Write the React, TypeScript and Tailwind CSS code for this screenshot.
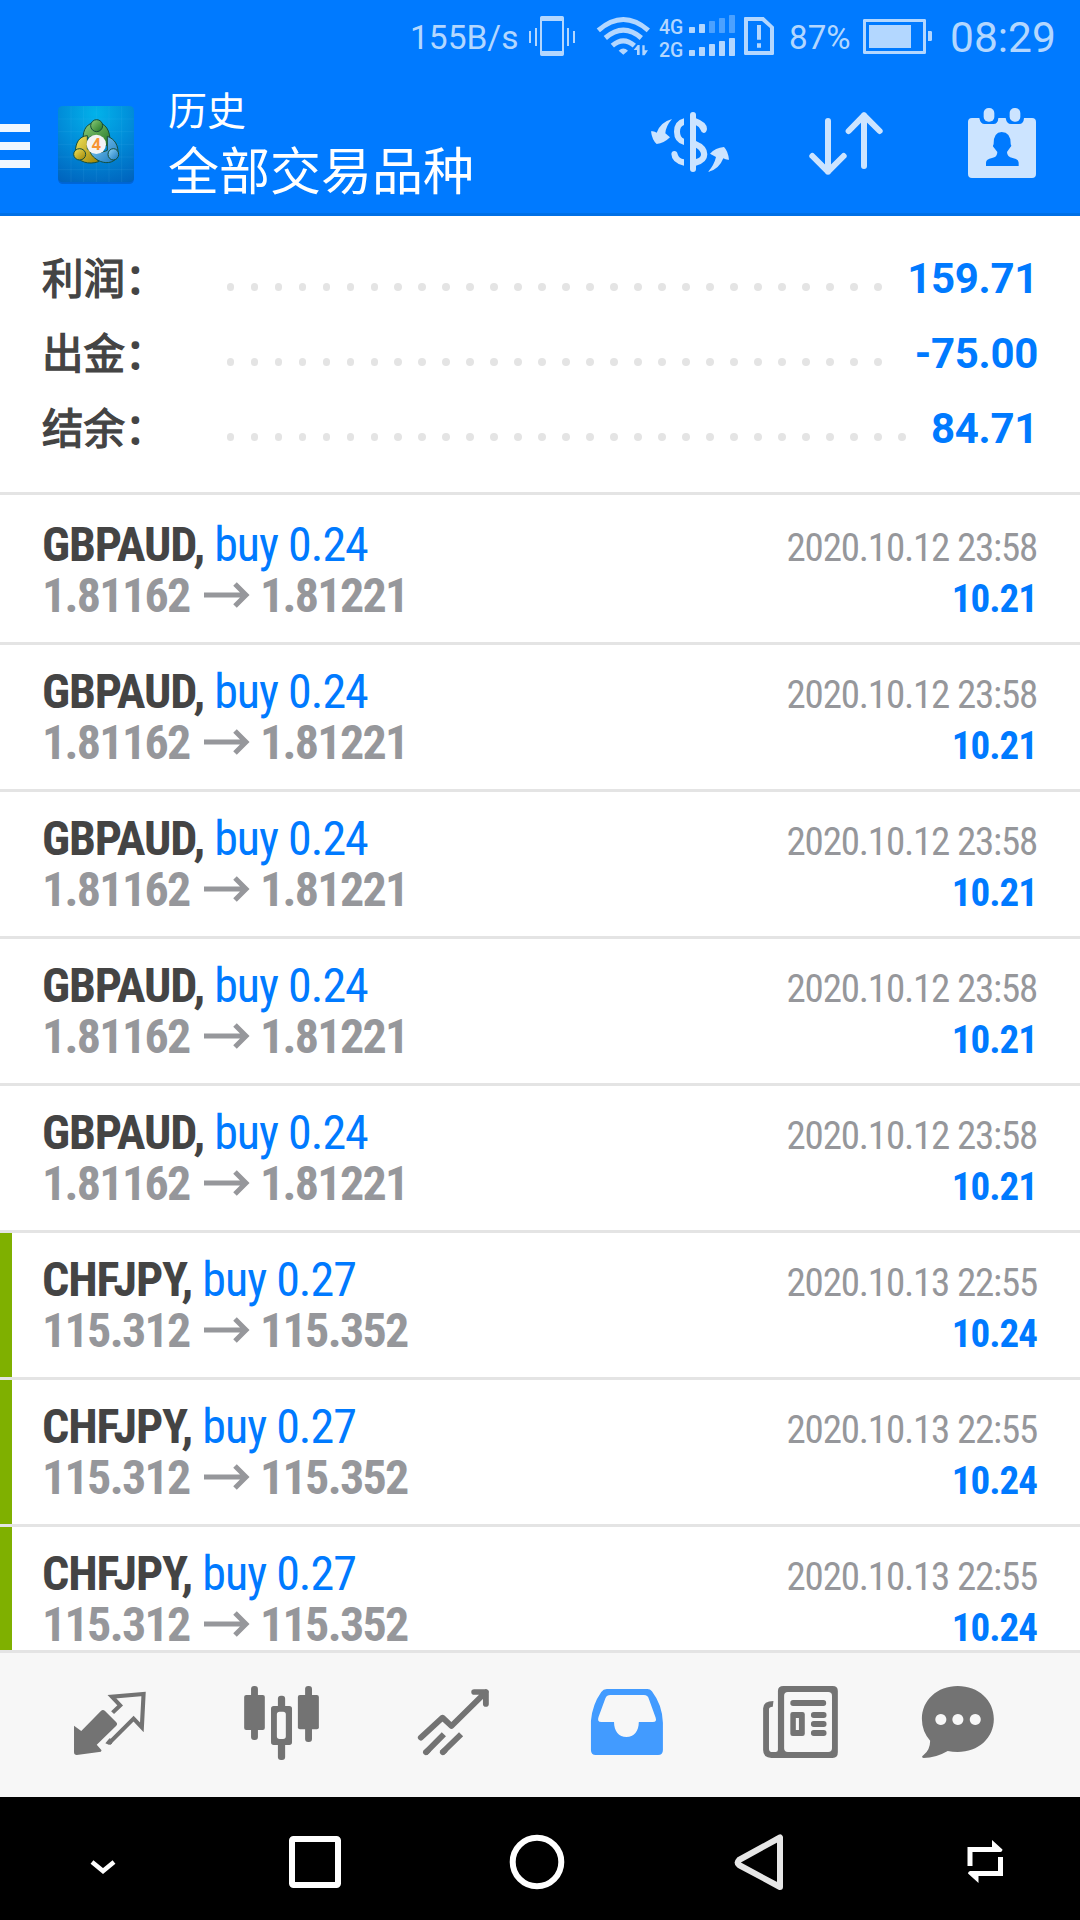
import React from "react";

type Trade = {
  symbol: string;
  volume: string;
  open: string;
  close: string;
  time: string;
  profit: string;
  tp?: boolean;
};

const gbp: Trade = {
  symbol: "GBPAUD,",
  volume: "buy 0.24",
  open: "1.81162",
  close: "1.81221",
  time: "2020.10.12 23:58",
  profit: "10.21",
};
const chf: Trade = {
  symbol: "CHFJPY,",
  volume: "buy 0.27",
  open: "115.312",
  close: "115.352",
  time: "2020.10.13 22:55",
  profit: "10.24",
  tp: true,
};
const trades: Trade[] = [gbp, gbp, gbp, gbp, gbp, chf, chf, chf];

const totals = [
  { label: "利润：", dots: 28, value: "159.71" },
  { label: "出金：", dots: 28, value: "-75.00" },
  { label: "结余：", dots: 29, value: "84.71" },
];

function StatusBar() {
  return (
    <div className="flex h-[75px] items-start text-[#b3d7ff]">
      <div className="ml-[410px] mt-[18px] w-[118px] whitespace-nowrap text-[33.5px] leading-[39px]">155B/s</div>
      <svg className="mt-[14px] h-[43px] w-[48px] shrink-0" viewBox="384 42 144 129" fill="currentColor">
        <path fillRule="evenodd" d="M425 48h62q5 0 5 5v110q0 5-5 5h-62q-5 0-5-5V53q0-5 5-5zM426 63v90h60V63z" />
        <path d="M387 93h6v36h-6zM405 84h6v54h-6zM501 84h6v54h-6zM519 93h6v36h-6z" />
      </svg>
      <svg className="ml-[20px] mt-[15px] h-[42px] w-[55px] shrink-0" viewBox="588 45 165 126" fill="none" stroke="currentColor" strokeWidth="15">
        <path d="M595 91Q670 26 745 91M616 114Q670 67 724 114M637 137Q670 108 703 137" />
        <path d="M656 152Q670 139 684 152L670 164z" fill="currentColor" stroke="none" />
        <path d="M701 150L713 135h6v30h-8v-15zM727 136h7v15h10l-10 15h-7z" fill="currentColor" stroke="none" />
      </svg>
      <div className="ml-[8px] mt-[15.5px] w-[29px] text-[19.5px] font-medium leading-[23px]">
        <div>4G</div>
        <div>2G</div>
      </div>
      <svg className="mt-[14px] h-[43px] w-[48px] shrink-0" viewBox="864 42 144 129" fill="currentColor">
        <rect x="867" y="81" width="18" height="18" rx="2" />
        <rect x="897" y="72" width="18" height="27" rx="2" />
        <g opacity=".42">
          <rect x="927" y="63" width="18" height="36" rx="2" />
          <rect x="957" y="54" width="18" height="45" rx="2" />
          <rect x="987" y="45" width="18" height="54" rx="2" />
        </g>
        <rect x="867" y="150" width="18" height="18" rx="2" />
        <rect x="897" y="141" width="18" height="27" rx="2" />
        <rect x="927" y="132" width="18" height="36" rx="2" />
        <rect x="957" y="123" width="18" height="45" rx="2" />
        <rect x="987" y="114" width="18" height="54" rx="2" />
      </svg>
      <svg className="ml-[7px] mt-[15px] h-[41px] w-[32px] shrink-0" viewBox="9 45 96 123" fill="currentColor">
        <path fillRule="evenodd" d="M14 51h57l31 29v81q0 4-4 4H16q-4 0-4-4V53zM24 63v90h66V84L66 63z" />
        <path d="M51 75h12v44H51zM51 130h12v13H51z" />
      </svg>
      <div className="ml-[14px] mt-[18px] w-[73px] whitespace-nowrap text-[33.2px] leading-[39px]">87%</div>
      <svg className="mt-[17px] h-[39px] w-[71px] shrink-0" viewBox="366 51 213 117" fill="currentColor">
        <path fillRule="evenodd" d="M373 57h181q4 0 4 4v97q0 4-4 4H373q-4 0-4-4V61q0-4 4-4zM378 66v87h171V66z" />
        <path d="M387 75h126v69H387zM564 93h8q4 0 4 4v22q0 4-4 4h-8z" />
      </svg>
      <div className="ml-[17px] mt-[13px] whitespace-nowrap text-[42.5px] leading-[49px]">08:29</div>
    </div>
  );
}

function AppLogo() {
  return (
    <svg className="ml-[26px] mt-[28px] h-[82px] w-[80px] shrink-0" viewBox="168 84 240 246">
      <defs>
        <radialGradient id="tile" cx=".5" cy=".1" r="1">
          <stop offset="0" stopColor="#02b2ea" />
          <stop offset=".5" stopColor="#018bd8" />
          <stop offset="1" stopColor="#0063bd" />
        </radialGradient>
        <linearGradient id="green" x1="0" y1="0" x2="1" y2="1">
          <stop offset="0" stopColor="#8fcf7c" />
          <stop offset="1" stopColor="#1f7423" />
        </linearGradient>
        <linearGradient id="gold" x1="0" y1="0" x2="1" y2="1">
          <stop offset="0" stopColor="#f3e45c" />
          <stop offset="1" stopColor="#9c8204" />
        </linearGradient>
        <linearGradient id="sky" x1="0" y1="0" x2="1" y2="1">
          <stop offset="0" stopColor="#8fd3f7" />
          <stop offset="1" stopColor="#1576bd" />
        </linearGradient>
      </defs>
      <rect x="174" y="98" width="228" height="229" rx="14" fill="#003f8f" opacity=".35" />
      <rect x="174" y="93" width="228" height="229" rx="14" fill="url(#tile)" />
      <path d="M213 94v227M251 94v227M289 94v227M327 94v227M365 94v227M175 132h226M175 170h226M175 208h226M175 246h226M175 284h226" stroke="#7fd4ff" strokeOpacity=".14" strokeWidth="2" />
      <g stroke="#154d3a" strokeWidth="3">
        <path d="M250 196c-4-34 14-54 39-54s45 24 40 64l-20 10-4-30-30-2z" fill="url(#green)" />
        <path d="M262 182c-24 2-36 20-36 52 8 28 40 36 70 26l-16-28-18-10z" fill="url(#gold)" />
        <path d="M322 184c22 8 34 26 32 56-10 28-44 28-66 12-12-8-18-18-18-26 18 6 36 8 52 0z" fill="url(#sky)" />
        <circle cx="290" cy="152" r="18" fill="url(#green)" />
        <ellipse cx="239" cy="238" rx="18" ry="17" fill="url(#gold)" />
        <ellipse cx="340" cy="238" rx="16" ry="17" fill="url(#sky)" />
      </g>
      <circle cx="289" cy="208" r="29" fill="#f3f3f6" />
      <text x="289" y="225" textAnchor="middle" fontSize="48" fontWeight="700" fill="#f79433" fontFamily="Open Sans, sans-serif">4</text>
    </svg>
  );
}

function Header() {
  return (
    <header className="h-[216px] shrink-0 border-b-[3px] border-[#0070e6] bg-[#007aff] text-white">
      <StatusBar />
      <div className="flex h-[138px] items-start">
        <div className="mt-[49px] flex w-[30px] flex-col gap-[10px]">
          <div className="h-[8px] bg-[#f0f7ff]" />
          <div className="h-[8px] bg-[#f0f7ff]" />
          <div className="h-[8px] bg-[#f0f7ff]" />
        </div>
        <AppLogo />
        <div className="ml-[32px] mt-[5px] w-[482px] font-['Noto_Sans_CJK_SC',sans-serif]">
          <div className="text-[39px] leading-[57px]">历史</div>
          <div className="text-[51px] leading-[62px]">全部交易品种</div>
        </div>
        <svg className="mt-[35px] h-[64px] w-[80px] shrink-0" viewBox="90 105 240 192" fill="#cce4ff">
          <rect x="210" y="111" width="18" height="180" rx="9" />
          <path d="M192 130v20q-12 4-12 20t12 21v19q-30-8-30-40t30-40z" />
          <path d="M228 130q33 12 33 32-2 12-10 12-7-1-9-9-4-10-14-14z" />
          <path d="M228 198q34 14 34 40t-34 34v-20q15-3 15-14t-15-20z" />
          <path d="M192 272q-37-8-38-35 1-9 9-9 8 0 10 10 4 13 19 15z" />
          <path d="M156 132q-19 22-20 43l14 12q-18 18-40 20-14-12-17-38 10-2 17 4 12-32 46-41z" />
          <path d="M264 291q19-22 24-45l-18-10q16-18 42-20 12 12 15 38-9 1-17-4-13 34-46 41z" />
        </svg>
        <svg className="ml-[78px] mt-[35px] h-[66px] w-[77px] shrink-0" viewBox="564 105 231 198" fill="none" stroke="#cce4ff" strokeWidth="18" strokeLinecap="round" strokeLinejoin="round">
          <path d="M624 138v152M577 243l47 47 47-47M732 273V121M686 168l46-47 47 47" />
        </svg>
        <svg className="ml-[82px] mt-[32px] h-[72px] w-[70px] shrink-0" viewBox="1041 96 210 216" fill="#cce4ff">
          <path fillRule="evenodd" d="M1056 129h22q3 18 16 18h26q14 0 15-18h22q3 18 16 18h24q14 0 15-18h24q12 0 12 12v156q0 12-12 12h-180q-12 0-12-12V141q0-12 12-12zM1145 171q-25 1-24 37-4 5 0 9l11 14q0 16-16 18-18 3-18 14v10h98v-10q0-11-18-14-17-3-17-18l10-14q5-4 1-9 1-36-27-37z" />
          <rect x="1091" y="99" width="32" height="41" rx="15" />
          <rect x="1169" y="99" width="32" height="41" rx="15" />
        </svg>
      </div>
    </header>
  );
}

function Summary() {
  return (
    <section className="h-[279px] shrink-0 border-b-[3px] border-[#e4e4e4] pt-[23px]">
      {totals.map((t) => (
        <div key={t.label} className="flex h-[75px] items-center pl-[42px] pr-[42px]">
          <div className="w-[184.6px] font-['Noto_Sans_CJK_SC',sans-serif] text-[41.5px] leading-[75px] text-[#444] [-webkit-text-stroke:1.3px_#444]">{t.label}</div>
          <div className="mt-[21px] flex gap-[16.4px]">
            {Array.from({ length: t.dots }, (_, i) => (
              <span key={i} className="size-[7.6px] rounded-full bg-[#e4e4e4]" />
            ))}
          </div>
          <div className="ml-auto mt-[5px] whitespace-nowrap text-[42px] font-bold leading-[70px] tracking-[-0.3px] text-[#007aff]">{t.value}</div>
        </div>
      ))}
    </section>
  );
}

function TradeRow({ trade }: { trade: Trade }) {
  return (
    <div className="flex h-[147px] shrink-0 border-b-[3px] border-[#e4e4e4] font-['Roboto_Condensed',Roboto,sans-serif] first:h-[150px] first:pt-[3px]">
      <div className={trade.tp ? "w-[12px] bg-[#7fb000]" : "w-[12px]"} />
      <div className="flex-1 pl-[30px] pr-[43px] pt-[21px]">
        <div className="flex h-[51px] items-baseline justify-between leading-[51px]">
          <div className="whitespace-nowrap text-[48px] tracking-[-1px]">
            <span className="font-bold tracking-[-1.1px] text-[#444]">{trade.symbol}</span>{" "}
            <span className="text-[#007aff]">{trade.volume}</span>
          </div>
          <div className="whitespace-nowrap text-[39px] tracking-[-1.2px] text-[#96979b]">{trade.time}</div>
        </div>
        <div className="flex h-[51px] items-baseline justify-between leading-[51px]">
          <div className="flex items-baseline whitespace-nowrap text-[48px] font-bold tracking-[-1.7px] text-[#96979b]">
            <span className="w-[162px]">{trade.open}</span>
            <svg className="mb-[2px] h-[26px] w-[46px] self-center" viewBox="0 0 46 26" fill="none" stroke="currentColor" strokeWidth="5">
              <path d="M0 13h42M31 2l11 11-11 11" />
            </svg>
            <span className="ml-[10px]">{trade.close}</span>
          </div>
          <div className="whitespace-nowrap text-[39px] font-bold tracking-[-1px] text-[#007aff]">{trade.profit}</div>
        </div>
      </div>
    </div>
  );
}

function TabBar() {
  const icon = "h-[80px] w-[90px] shrink-0";
  return (
    <nav className="flex h-[147px] shrink-0 items-start border-t-[3px] border-[#e4e4e4] bg-[#f7f7f7] pt-[29px] text-[#737373]">
      <svg className={icon + " ml-[65px]"} viewBox="188.8 126 261.4 240" preserveAspectRatio="none" fill="currentColor">
        <path d="M215 257l21 16 57-60q6-6 12 0l32 33q6 6 0 12l-56 56 14 17-2 4-70 10q-8 0-8-8z" />
        <path fill="none" stroke="currentColor" strokeWidth="12" d="M327 218l22-22-24-26 92-8-5 100-24-26-72 74" />
        <path d="M306 310l10 4q6 0 9-3l3-12-10-4z" />
      </svg>
      <svg className={icon + " ml-[82px]"} viewBox="688.2 126 261.4 240" preserveAspectRatio="none" fill="currentColor">
        <rect x="729" y="138" width="20" height="162" rx="9" />
        <rect x="709" y="165" width="60" height="105" rx="6" />
        <rect x="886" y="138" width="20" height="168" rx="9" />
        <rect x="865" y="165" width="61" height="103" rx="6" />
        <rect x="807" y="167" width="21" height="40" rx="9" />
        <rect x="807" y="305" width="21" height="55" rx="9" />
        <path fillRule="evenodd" d="M795 198h45q8 0 8 8v101q0 8-8 8h-45q-8 0-8-8V206q0-8 8-8zM812 215q-8 0-8 8v66q0 8 8 8h10q8 0 8-8v-66q0-8-8-8z" />
      </svg>
      <svg className={icon + " ml-[82px]"} viewBox="1187.7 126 261.4 240" preserveAspectRatio="none" fill="none" stroke="currentColor" strokeWidth="17" strokeLinejoin="round">
        <path strokeLinecap="round" d="M1222 293l63-60 26 25 100-102M1377 156h34v36" />
        <path d="M1289 283l-54 56M1339 283l-56 56" />
        <path strokeLinecap="round" d="M1237 337l5-5M1286 337l5-5" />
      </svg>
      <svg className={icon + " ml-[83px]"} viewBox="122 126 261.4 240" preserveAspectRatio="none" fill="#429bff">
        <path fillRule="evenodd" d="M194 147h118q8 0 13 7 30 40 32 94v82q0 15-14 15H162q-14 0-14-15v-88q4-48 30-86 6-9 16-9zM204 165q-10 0-14 10l-20 56q-5 15 8 15h37c0 28 14 45 36 45s36-17 36-45h41q12 0 8-13l-20-57q-3-11-14-11z" />
      </svg>
      <svg className={icon + " ml-[83px]"} viewBox="624.4 126 261.4 240" preserveAspectRatio="none" fill="currentColor">
        <path fillRule="evenodd" d="M707 138h143q15 0 15 15v184q0 17-15 17H672q-24-1-24-24V205q1-22 30-22l-2 17q-11 0-11 8v118q0 10 10 10h9q7 0 7-7V153q0-15 16-15zM720 156q-11 0-11 11v158q0 11 11 11h117q11 0 11-11V167q0-11-11-11z" />
        <rect x="727" y="180" width="104" height="18" rx="8" />
        <path fillRule="evenodd" d="M734 216h28q7 0 7 7v58q0 7-7 7h-28q-7 0-7-7v-58q0-7 7-7zM743 234v36h9v-36z" />
        <rect x="787" y="216" width="45" height="18" rx="8" />
        <rect x="787" y="243" width="45" height="18" rx="8" />
        <rect x="787" y="270" width="45" height="18" rx="8" />
      </svg>
      <svg className={icon + " ml-[68px]"} viewBox="1083.2 126 261.4 240" preserveAspectRatio="none" fill="currentColor">
        <path fillRule="evenodd" d="M1213 138c60 0 105 42 105 99s-45 99-105 99q-15 0-29-3-35 21-70 21-9-2 0-9 19-16 19-43-24-28-24-65c0-57 45-99 104-99zM1164 222a16 16.500 0 1 0 .1 0zM1213.500 222a16 16.500 0 1 0 .1 0zM1264 222a16 16.500 0 1 0 .1 0z" />
      </svg>
    </nav>
  );
}

function SystemNav() {
  return (
    <div className="flex h-[123px] shrink-0 items-start bg-black pt-[33px] text-white">
      <svg className="ml-[83px] h-[64px] w-[40px] shrink-0" viewBox="83 1830 40 64" fill="none" stroke="currentColor" strokeWidth="4.500">
        <path d="M92 1862l11 9 11-9" />
      </svg>
      <svg className="ml-[162px] h-[64px] w-[60px] shrink-0" viewBox="285 1830 60 64" fill="none" stroke="currentColor" strokeWidth="6">
        <rect x="292" y="1839" width="46" height="46" rx="1.500" />
      </svg>
      <svg className="ml-[162px] h-[64px] w-[60px] shrink-0" viewBox="507 1830 60 64" fill="none" stroke="currentColor" strokeWidth="6">
        <circle cx="537" cy="1862" r="24.300" />
      </svg>
      <svg className="ml-[163px] h-[64px] w-[60px] shrink-0" viewBox="730 1830 60 64" fill="none" stroke="#e6e6e6" strokeWidth="6" strokeLinejoin="round">
        <path d="M780 1837.500v49.500l-41-22q-2.500-2.500 0-5z" />
      </svg>
      <svg className="ml-[170px] h-[64px] w-[50px] shrink-0" viewBox="960 1830 50 64" fill="none" stroke="currentColor" strokeWidth="5">
        <path d="M970 1866v-16.500h25M1000.500 1857v16.500H976" />
        <path d="M992 1840l10.500 9.500q0 2-2 2.500H992zM978.500 1883l-10.500-9.500q0-2 2-2.500h8.500z" fill="currentColor" stroke="none" />
      </svg>
    </div>
  );
}

export default function App() {
  return (
    <div className="flex h-[1920px] w-[1080px] flex-col overflow-hidden bg-white font-['Roboto',sans-serif]">
      <Header />
      <Summary />
      <main className="flex h-[1155px] shrink-0 flex-col overflow-hidden">
        {trades.map((t, i) => (
          <TradeRow key={i} trade={t} />
        ))}
      </main>
      <TabBar />
      <SystemNav />
    </div>
  );
}
